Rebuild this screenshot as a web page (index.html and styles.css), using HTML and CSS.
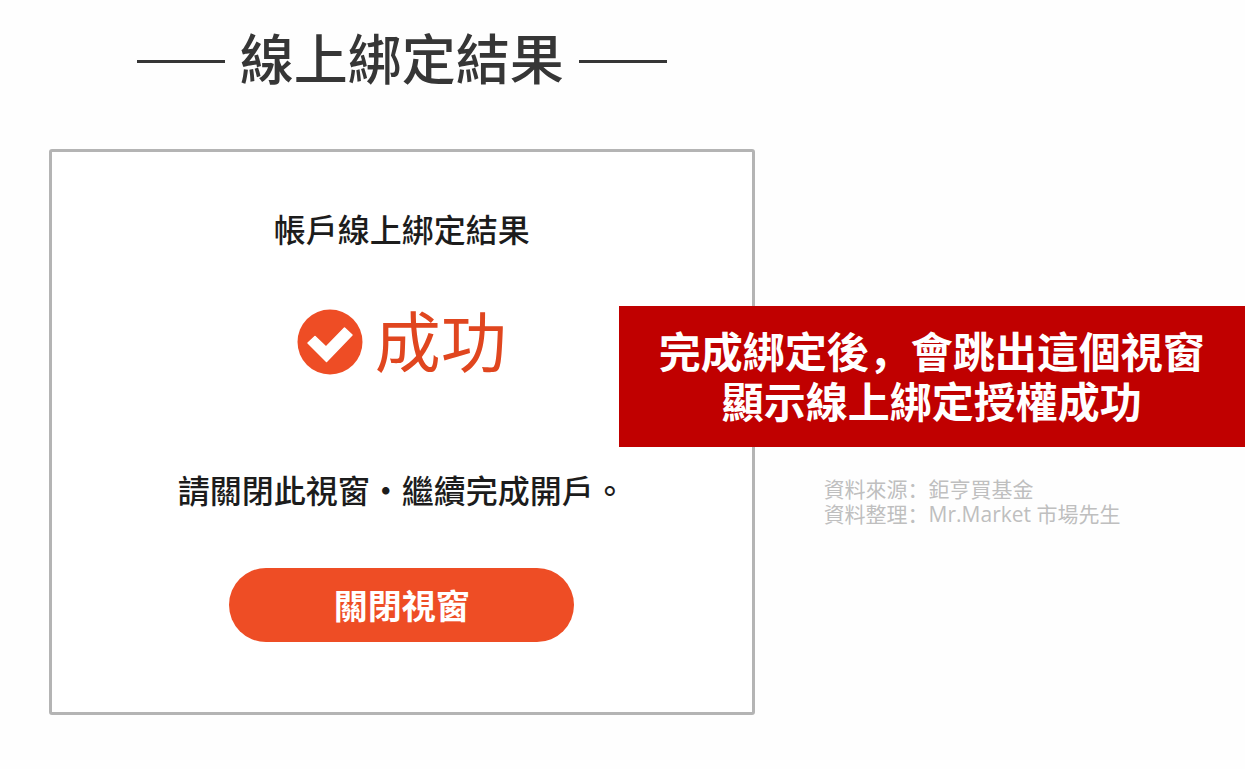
FILE: index.html
```html
<!DOCTYPE html>
<html lang="zh-Hant">
<head>
<meta charset="utf-8">
<meta name="viewport" content="width=device-width, initial-scale=1">
<title>線上綁定結果</title>
<link rel="stylesheet" href="styles.css">
</head>
<body>
<div class="page">
  <main class="result">
    <h1 class="title">線上綁定結果</h1>
    <section class="card">
      <h2 class="card-heading">帳戶線上綁定結果</h2>
      <p class="status">
        <svg class="status-icon" viewBox="0 0 66 66" aria-hidden="true">
          <circle cx="33" cy="33" r="32.500" fill="#ee4d25"/>
          <path d="M11 34l7-6.500 11 10.500 18.500-19 7.500 7-25.500 26.500z" fill="#fff" stroke="#fff" stroke-width="1.500" stroke-linejoin="round"/>
        </svg>
        <span>成功</span>
      </p>
      <p class="hint">請關閉此視窗・繼續完成開戶。</p>
      <button class="close-button" type="button">關閉視窗</button>
    </section>
  </main>
  <aside class="notes" lang="zh-Hans">
    <p class="callout">完成綁定後，會跳出這個視窗<br>顯示線上綁定授權成功</p>
    <p class="source">資料來源：鉅亨買基金<br>資料整理：Mr.Market 市場先生</p>
  </aside>
</div>
</body>
</html>
```
FILE: styles.css
```css
* {
  box-sizing: border-box;
}

body {
  margin: 0;
  background: #fefefe;
  font-family: "Noto Sans CJK TC", sans-serif;
  color: #1c1c1c;
}

h1,
h2,
p {
  margin: 0;
}

.page {
  display: flex;
  align-items: flex-start;
  padding: 20px 0 54px 49px;
}

.result {
  flex: 0 0 59%;
}

.title {
  display: grid;
  grid-template-columns: 88px auto 88px;
  align-items: end;
  justify-content: center;
  gap: 15px;
  font-size: 54px;
  line-height: 74px;
  font-weight: 500;
  color: #363636;
}

.title::before,
.title::after {
  content: "";
  height: 3px;
  margin-bottom: 31px;
  background: #363636;
}

.card {
  display: flex;
  flex-direction: column;
  align-items: center;
  margin-top: 55px;
  padding: 54px 24px 70px;
  border: 3px solid #b4b4b4;
  border-radius: 3px;
  background: #fff;
}

.card-heading,
.hint {
  font-size: 32px;
  line-height: 44px;
  font-weight: 500;
}

.status {
  display: flex;
  align-items: flex-end;
  gap: 12px;
  margin-top: 42px;
  font-size: 66px;
  line-height: 92px;
  font-weight: 400;
  color: #e0461f;
}

.status-icon {
  width: 66px;
  height: 66px;
  margin-bottom: 9px;
}

.hint {
  margin-top: 83px;
}

.close-button {
  width: 345px;
  max-width: 100%;
  height: 74px;
  margin-top: 57px;
  border: 0;
  border-radius: 37px;
  background: #ee4d25;
  color: #fff;
  font: 700 34px/50px "Noto Sans CJK TC", sans-serif;
}

.notes {
  flex: 1;
  margin-top: 286px;
  margin-left: -136px;
}

.callout {
  padding: 19px 0 22px;
  background: #c00000;
  color: #fff;
  font: 700 42px/50px "Noto Sans CJK SC", sans-serif;
  text-align: center;
}

.source {
  margin-top: 30px;
  padding-left: 205px;
  color: #bfbfbf;
  font: 400 21px/25px "Open Sans", "Noto Sans CJK SC", sans-serif;
}
```
